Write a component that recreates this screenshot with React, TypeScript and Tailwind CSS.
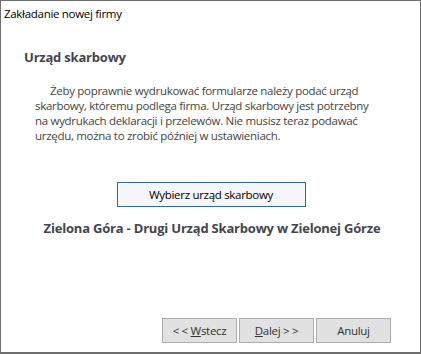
const font = { fontFamily: '"Open Sans", "Noto Sans", sans-serif' };

const LINES = [
  'Żeby poprawnie wydrukować formularze należy podać urząd',
  'skarbowy, któremu podlega firma. Urząd skarbowy jest potrzebny',
  'na wydrukach deklaracji i przelewów. Nie musisz teraz podawać',
  'urzędu, można to zrobić później w ustawieniach.',
];

export default function App() {
  return (
    <div
      className="w-[421px] h-[354px] bg-white border border-[#6e6e6e] border-b-2 flex flex-col text-[11.5px] tracking-[-0.3px]"
      style={font}
    >
      <div className="pl-[3px] pt-[4px] h-[20px] leading-[17px] text-black">Zakładanie nowej firmy</div>

      <h1 className="pl-[23px] mt-[27px] text-[13px] font-bold leading-[18px] tracking-[-0.2px] text-[#444450]">
        Urząd skarbowy
      </h1>

      <div className="pl-[34px] mt-[17px] text-[#444] leading-[15px]">
        {LINES.map((l, i) => (
          <div key={i} className={i === 0 ? 'pl-[15px]' : ''}>
            {l}
          </div>
        ))}
      </div>

      <div className="flex justify-center pl-[1px] mt-[39px]">
        <button className="w-[189px] h-[25px] border border-[#0078d7] bg-[#f4f6f9] text-black leading-none">
          Wybierz urząd skarbowy
        </button>
      </div>

      <div className="mt-[12px] text-center pl-[3px] text-[13px] font-bold leading-[18px] tracking-[-0.2px] text-[#444450]">
        Zielona Góra - Drugi Urząd Skarbowy w Zielonej Górze
      </div>

      <div className="mt-auto mb-[9px] pr-[29px] flex justify-end gap-[2px] text-[#333]">
        <button className="w-[75px] h-[25px] bg-[#e1e1e1] border border-[#adadad] leading-none">
          &lt; &lt; <span className="underline">W</span>stecz
        </button>
        <button className="w-[75px] h-[25px] bg-[#e1e1e1] border border-[#adadad] leading-none">
          <span className="underline">D</span>alej &gt; &gt;
        </button>
        <button className="w-[75px] h-[25px] bg-[#e1e1e1] border border-[#adadad] leading-none">
          Anuluj
        </button>
      </div>
    </div>
  );
}
